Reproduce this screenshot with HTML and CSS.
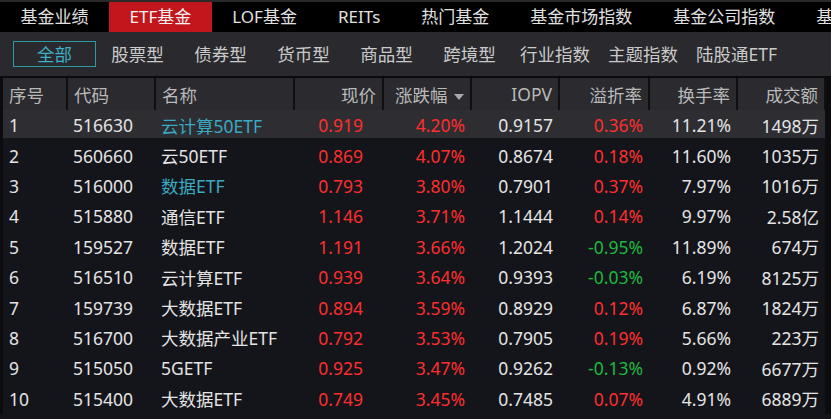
FILE: index.html
```html
<!DOCTYPE html>
<html lang="zh-CN">
  <head>
    <meta charset="UTF-8" />
    <meta name="viewport" content="width=device-width, initial-scale=1.0" />
    <title>ETF基金</title>
    <link rel="stylesheet" href="styles.css">
  </head>
  <body>
    <div class="tabs">
      <div class="tab">基金业绩</div>
      <div class="tab active">ETF基金</div>
      <div class="tab">LOF基金</div>
      <div class="tab">REITs</div>
      <div class="tab">热门基金</div>
      <div class="tab">基金市场指数</div>
      <div class="tab">基金公司指数</div>
      <div class="tab">基金</div>
    </div>

    <div class="filters">
      <div class="filter active">全部</div>
      <div class="filter">股票型</div>
      <div class="filter">债券型</div>
      <div class="filter">货币型</div>
      <div class="filter">商品型</div>
      <div class="filter">跨境型</div>
      <div class="filter">行业指数</div>
      <div class="filter">主题指数</div>
      <div class="filter">陆股通ETF</div>
    </div>

    <div class="grid">
      <table>
        <colgroup>
          <col style="width: 64px" />
          <col style="width: 88px" />
          <col style="width: 139px" />
          <col style="width: 89px" />
          <col style="width: 88px" />
          <col style="width: 88px" />
          <col style="width: 90px" />
          <col style="width: 88px" />
          <col style="width: 88px" />
        </colgroup>
        <thead>
          <tr>
            <th class="left">序号</th>
            <th class="left">代码</th>
            <th class="left">名称</th>
            <th>现价</th>
            <th>涨跌幅 <span class="sort"></span></th>
            <th>IOPV</th>
            <th>溢折率</th>
            <th>换手率</th>
            <th>成交额</th>
          </tr>
        </thead>
        <tbody id="rows"></tbody>
      </table>
    </div>

    <script>
      var data = [
        ["1", "516630", "云计算50ETF", "0.919", "4.20%", "0.9157", "0.36%", "11.21%", "1498万", true],
        ["2", "560660", "云50ETF", "0.869", "4.07%", "0.8674", "0.18%", "11.60%", "1035万", false],
        ["3", "516000", "数据ETF", "0.793", "3.80%", "0.7901", "0.37%", "7.97%", "1016万", true],
        ["4", "515880", "通信ETF", "1.146", "3.71%", "1.1444", "0.14%", "9.97%", "2.58亿", false],
        ["5", "159527", "数据ETF", "1.191", "3.66%", "1.2024", "-0.95%", "11.89%", "674万", false],
        ["6", "516510", "云计算ETF", "0.939", "3.64%", "0.9393", "-0.03%", "6.19%", "8125万", false],
        ["7", "159739", "大数据ETF", "0.894", "3.59%", "0.8929", "0.12%", "6.87%", "1824万", false],
        ["8", "516700", "大数据产业ETF", "0.792", "3.53%", "0.7905", "0.19%", "5.66%", "223万", false],
        ["9", "515050", "5GETF", "0.925", "3.47%", "0.9262", "-0.13%", "0.92%", "6677万", false],
        ["10", "515400", "大数据ETF", "0.749", "3.45%", "0.7485", "0.07%", "4.91%", "6889万", false]
      ];

      var tbody = document.getElementById("rows");
      data.forEach(function (d, i) {
        var tr = document.createElement("tr");
        if (i === 0) tr.className = "selected";
        var premium = d[6].charAt(0) === "-" ? "down" : "up";
        tr.innerHTML =
          '<td class="left">' + d[0] + "</td>" +
          '<td class="left">' + d[1] + "</td>" +
          '<td class="left' + (d[9] ? " link" : "") + '">' + d[2] + "</td>" +
          '<td class="up price">' + d[3] + "</td>" +
          '<td class="up">' + d[4] + "</td>" +
          "<td>" + d[5] + "</td>" +
          '<td class="' + premium + '">' + d[6] + "</td>" +
          "<td>" + d[7] + "</td>" +
          "<td>" + d[8] + "</td>";
        tbody.appendChild(tr);
      });
    </script>
  </body>
</html>
```

FILE: styles.css
```css
body {
  margin: 0;
  background-color: #14151a;
  font-family: "Noto Sans", "Noto Sans CJK SC", sans-serif;
  color: #e4e4e4;
  overflow: hidden;
}

/* top tabs */
.tabs {
  display: flex;
  height: 30px;
  border-top: 2px solid #2a2a2a;
  background-color: #000;
  white-space: nowrap;
  overflow: hidden;
}

.tab {
  flex-shrink: 0;
  padding: 0 20.5px;
  line-height: 30px;
  font-size: 17px;
  color: #e0e0e0;
}

.tab.active {
  background-color: #c3161c;
  color: #f2f2f2;
}

/* filter bar */
.filters {
  display: flex;
  align-items: center;
  height: 44px;
  padding-left: 13px;
  background-color: #29292e;
  border-bottom: 2px solid #0b0b0d;
}

.filter {
  min-width: 83px;
  padding: 0 8px;
  box-sizing: border-box;
  text-align: center;
  font-size: 17.5px;
  line-height: 24px;
  color: #c9c9c9;
  border: 1px solid transparent;
}

.filter.active {
  color: #3cb0c4;
  border-color: #2a9aa7;
}

/* table */
.grid {
  padding-left: 3px;
  background-color: #0c0c0e;
}

table {
  border-collapse: collapse;
  table-layout: fixed;
  width: 822px;
  font-size: 17.5px;
}

th {
  height: 32px;
  padding: 0 6px;
  background-color: #2a2a2f;
  border-right: 2px solid #101013;
  color: #b9b9b9;
  font-weight: normal;
  text-align: right;
  white-space: nowrap;
}

td {
  height: 30.4px;
  padding: 0 6px;
  text-align: right;
  white-space: nowrap;
  background-color: #14151a;
}

.left {
  text-align: left;
  padding-left: 6px;
}

td.price {
  padding-right: 20px;
}

tr.selected td {
  background-color: #2d2d32;
  box-shadow: inset 0 -2px #14151a;
}

.link {
  color: #3ba9c2;
}

.up {
  color: #ff2e2e;
}

.down {
  color: #1db83e;
}

.sort {
  display: inline-block;
  width: 0;
  height: 0;
  margin-left: 2px;
  vertical-align: middle;
  border-left: 5px solid transparent;
  border-right: 5px solid transparent;
  border-top: 6px solid #a8a8a8;
}
```
